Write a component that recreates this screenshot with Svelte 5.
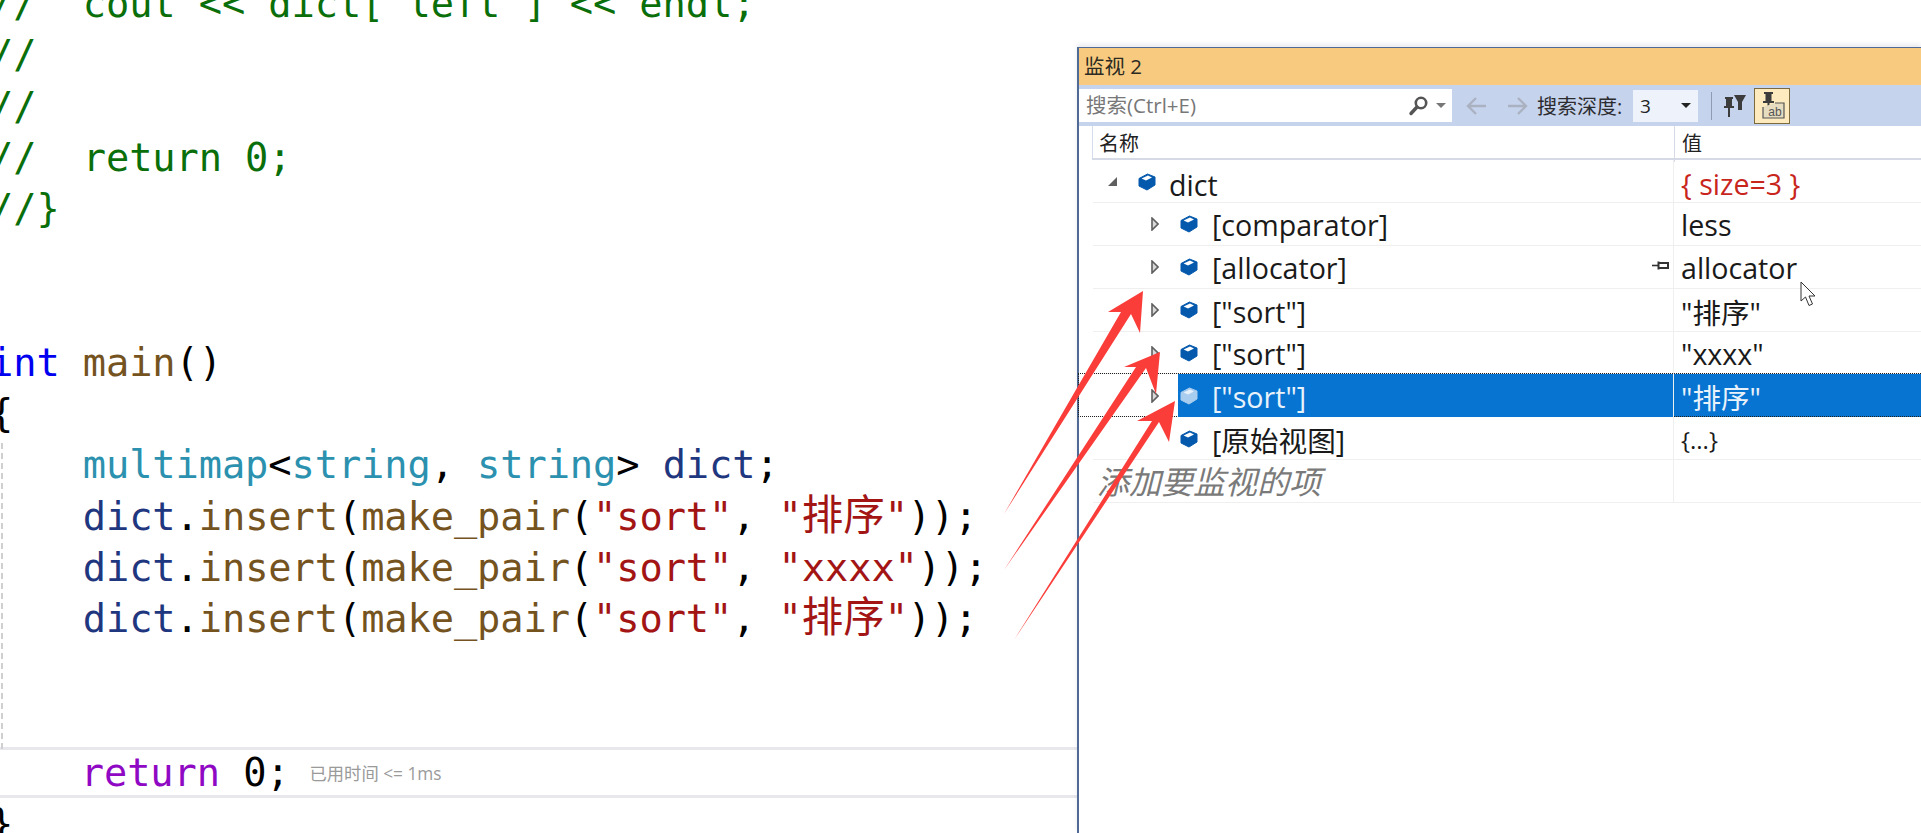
<script>
  const code = [
    [['c', '//  cout << dict["left"] << endl;']],
    [['c', '//']],
    [['c', '//']],
    [['c', '//  return 0;']],
    [['c', '//}']],
    [],
    [],
    [['k', 'int'], ['p', ' '], ['f', 'main'], ['p', '()']],
    [['p', '{']],
    [['p', '    '], ['t', 'multimap'], ['p', '<'], ['t', 'string'], ['p', ', '], ['t', 'string'], ['p', '> '], ['v', 'dict'], ['p', ';']],
    insertLine('排序', true),
    insertLine('xxxx', false),
    insertLine('排序', true),
    [],
    []
  ];

  function insertLine(val, cjk) {
    return [
      ['p', '    '], ['v', 'dict'], ['p', '.'], ['f', 'insert'], ['p', '('], ['f', 'make_pair'], ['p', '('],
      ['s', '"sort"'], ['p', ', '], ['s', '"'], [cjk ? 's cjk' : 's', val], ['s', '"'], ['p', '));']
    ];
  }

  const rows = [
    { name: '[comparator]', value: 'less' },
    { name: '[allocator]', value: 'allocator', pin: true },
    { name: '["sort"]', value: '"排序"' },
    { name: '["sort"]', value: '"xxxx"' },
    { name: '["sort"]', value: '"排序"', selected: true },
    { name: '[原始视图]', value: '{...}', small: true, noArrow: true }
  ];

  const arrows = [
    '1004,514 1121,312 1108,312 1143,291 1140,333 1131,314',
    '1004,570 1136,367 1124,367 1160,352 1156,394 1146,368',
    '1014,640 1152,421 1137,421 1175,401 1169,442 1159,422'
  ];
</script>

{#snippet cube(light)}
  <svg class="cube" width="18" height="18" viewBox="0 0 18 18">
    <path d="M9.5 1 L17 4 V12 L9 17 L1 13 V5.5 Z" fill={light ? '#a9cdee' : '#0559ad'} stroke={light ? '#a9cdee' : '#0559ad'} stroke-linejoin="round" />
    <path d="M3.6 5.6 L10 2.6 L14 4.4 L8 7.6 Z" fill={light ? '#e6f1fb' : '#ffffff'} />
  </svg>
{/snippet}

{#snippet closedArrow()}
  <svg width="8" height="14" viewBox="0 0 8 14"><path d="M1 1 L7 7 L1 13 Z" fill="#d9d9d9" stroke="#5f5f5f" stroke-width="1.6" /></svg>
{/snippet}

<div class="page">
  <div class="code">
    {#each code as line}
      <div class="line">{#each line as [cls, text]}<span class={cls}>{text}</span>{/each}</div>
    {/each}
    <div class="line current">
      {'    '}<span class="r">return</span>{' '}<span class="p">0;</span><span class="elapsed">已用时间 &lt;= 1ms</span>
    </div>
    <div class="line"><span class="p">{'}'}</span></div>
    <div class="guide"></div>
  </div>

  <section class="watch">
    <div class="title">监视 2</div>
    <div class="toolbar">
      <div class="search">
        <span class="hint">搜索(Ctrl+E)</span>
        <svg width="22" height="22" viewBox="0 0 22 22">
          <circle cx="13" cy="8" r="5.2" fill="none" stroke="#555" stroke-width="2.6" />
          <path d="M9 12 L3 18.5" stroke="#555" stroke-width="3.4" stroke-linecap="round" />
        </svg>
        <svg class="caret" width="10" height="6" viewBox="0 0 10 6"><path d="M0 0 H10 L5 5 Z" fill="#777" /></svg>
      </div>
      <svg class="nav" width="70" height="24" viewBox="0 0 70 24" fill="none" stroke="#aab2c2" stroke-width="2.4">
        <path d="M21 12 H3 M11 4 L3 12 L11 20" />
        <path d="M43 12 H61 M53 4 L61 12 L53 20" />
      </svg>
      <span class="depth">搜索深度:</span>
      <div class="combo"><span>3</span><svg width="10" height="6" viewBox="0 0 10 6"><path d="M0 0 H10 L5 5 Z" fill="#222" /></svg></div>
      <div class="sep"></div>
      <svg class="pinfilter" width="24" height="26" viewBox="0 0 24 26">
        <path d="M3 4 H11 V6 H10 V13 H12 V15 H8 V24 H6 V15 H2 V13 H4 V6 H3 Z" fill="#3c3c3c" />
        <path d="M12 2 H24 L20 9 V17 H16 V9 Z" fill="#3c3c3c" />
      </svg>
      <div class="active">
        <svg width="28" height="30" viewBox="0 0 28 30">
          <path d="M6 1 H15 V3 H13.5 V10 H16 V12 H11.5 V19 H9.5 V12 H5 V10 H7.5 V3 H6 Z" fill="#3c3c3c" />
          <path d="M5 16 V27 H26 V12 H17" fill="#e6dcc0" stroke="#555" stroke-width="1.2" />
          <text x="17" y="24.5" font-size="12" text-anchor="middle" fill="#555" font-family="Liberation Sans, sans-serif">ab</text>
        </svg>
      </div>
    </div>

    <div class="head">
      <div class="headName">名称</div>
      <div class="headValue">值</div>
    </div>

    <div class="grid">
      <div class="row">
        <div class="cell name">
          <div class="gutter top"><svg width="10" height="10" viewBox="0 0 10 10"><path d="M9 0 V9 H0 Z" fill="#5f5f5f" /></svg></div>
          <div class="item top">{@render cube(false)}<span class="label">dict</span></div>
        </div>
        <div class="cell value red">{'{'} size=3 {'}'}</div>
      </div>
      {#each rows as row}
        <div class="row" class:focused={row.selected}>
          <div class="cell name">
            <div class="gutter">{#if !row.noArrow}{@render closedArrow()}{/if}</div>
            <div class="item" class:sel={row.selected}>
              {@render cube(row.selected)}<span class="label">{row.name}</span>
              {#if row.pin}
                <svg class="rowpin" width="18" height="12" viewBox="0 0 18 12"><path d="M0 5.5 H6" stroke="#333" stroke-width="1.6" /><path d="M6.5 1.5 V9.5 M6.5 3 H16 V8 H6.5" fill="none" stroke="#333" stroke-width="2" /></svg>
              {/if}
            </div>
          </div>
          <div class="cell value" class:sel={row.selected} class:small={row.small}>{row.value}</div>
        </div>
      {/each}
      <div class="row">
        <div class="cell name"><span class="add">添加要监视的项</span></div>
        <div class="cell value"></div>
      </div>
    </div>
  </section>

  <svg class="pointer" width="18" height="26" viewBox="0 0 18 26">
    <path d="M1 1 V20 L5.5 16 L9 24.5 L12.5 23 L9 15 H15 Z" fill="#fff" stroke="#333" stroke-width="1" />
  </svg>

  <svg class="arrows" width="1921" height="833" viewBox="0 0 1921 833">
    {#each arrows as points}
      <polygon {points} fill="#fb3d3a" />
    {/each}
  </svg>
</div>

<style>
  :global(body) {
    margin: 0;
    background: #fff;
  }

  .page {
    position: relative;
    display: flex;
    width: 1921px;
    height: 833px;
    overflow: hidden;
    background: #fff;
    font-family: 'Open Sans', 'Noto Sans CJK SC', sans-serif;
  }

  .code {
    position: relative;
    flex: 0 0 1077px;
    margin-top: -22px;
    font-family: 'DejaVu Sans Mono', 'Noto Sans CJK SC', monospace;
    font-size: 38.7px;
    letter-spacing: -0.1px;
  }

  .line {
    position: relative;
    height: 51.25px;
    line-height: 51.25px;
    padding-left: 10px;
    margin-left: -20px;
    white-space: pre;
    color: #000;
  }

  .line.current {
    box-sizing: border-box;
    margin-left: 0;
    padding-left: 0;
    border-top: 3px solid #e8e8ec;
    border-bottom: 3px solid #e8e8ec;
    line-height: 45px;
    text-indent: -12px;
  }

  .guide {
    position: absolute;
    left: 1px;
    top: 465px;
    height: 306px;
    border-left: 2px dashed #cfcfcf;
  }

  .c { color: #0a6f0a; }
  .k { color: #0000f0; }
  .f { color: #74531f; }
  .t { color: #2b91af; }
  .v { color: #1f377f; }
  .s { color: #a31515; }
  .r { color: #8f08c4; }
  .p { color: #000; }

  .cjk {
    font-family: 'Noto Sans CJK SC', sans-serif;
    font-size: 41.5px;
    line-height: 0;
  }

  .elapsed {
    margin-left: 20px;
    font-family: 'Open Sans', 'Noto Sans CJK SC', sans-serif;
    font-size: 17.3px;
    letter-spacing: 0;
    color: #9a9a9a;
    vertical-align: 6px;
    line-height: 0;
  }

  .watch {
    flex: 1;
    margin-top: 47px;
    position: relative;
    z-index: 1;
    background: #fff;
    border-left: 2px solid #4f6a94;
    border-top: 1px solid #4f6a94;
    box-shadow: 0 -3px 4px rgba(120, 130, 160, 0.15);
  }

  .title {
    height: 37px;
    line-height: 37px;
    padding-left: 5px;
    background: #f7ca80;
    font-size: 20.5px;
    color: #2c2a22;
  }

  .toolbar {
    display: flex;
    align-items: center;
    height: 41px;
    background: #c6d3ec;
  }

  .search {
    display: flex;
    align-items: center;
    box-sizing: border-box;
    width: 373px;
    height: 33px;
    padding: 0 6px 0 7px;
    background: #fff;
  }

  .hint {
    flex: 1;
    margin-top: -3px;
    font-size: 20.5px;
    color: #777;
  }

  .caret {
    margin-left: 6px;
  }

  .nav {
    margin-left: 13px;
  }

  .depth {
    flex: 0 0 86px;
    margin-left: 2px;
    font-size: 20px;
    color: #2c2c30;
    white-space: nowrap;
  }

  .combo {
    display: flex;
    align-items: center;
    justify-content: space-between;
    box-sizing: border-box;
    width: 65px;
    height: 32px;
    margin-left: 10px;
    padding: 0 7px;
    background: #eef2fb;
    font-size: 19px;
    color: #222;
  }

  .sep {
    width: 1px;
    height: 28px;
    margin-left: 13px;
    background: #8f9ab3;
  }

  .pinfilter {
    margin-left: 10px;
  }

  .active {
    display: flex;
    align-items: center;
    justify-content: center;
    box-sizing: border-box;
    width: 36px;
    height: 36px;
    margin-left: 8px;
    border: 1px solid #7c6a3c;
    background: #fdeabf;
  }

  .head {
    display: grid;
    grid-template-columns: 581px 1fr;
    height: 32px;
    margin-left: 13px;
    border-left: 1px solid #d5dcec;
    border-bottom: 2px solid #d5dae6;
    font-size: 20px;
    line-height: 36px;
    color: #222;
  }

  .headName {
    padding-left: 6px;
  }

  .headValue {
    padding-left: 7px;
    border-left: 1px solid #d5dae6;
  }

  .grid {
    margin-left: 14px;
  }

  .row {
    position: relative;
    display: grid;
    grid-template-columns: 580px 1fr;
    box-sizing: border-box;
    height: 42.9px;
    border-bottom: 1px solid #efefef;
  }

  .row.focused::before {
    content: '';
    position: absolute;
    left: -15px;
    right: 0;
    top: -1px;
    bottom: -1px;
    border-top: 1px dotted #222;
    border-bottom: 1px dotted #222;
    border-left: 1px dotted #222;
    pointer-events: none;
  }

  .cell {
    display: flex;
    align-items: center;
    min-width: 0;
    padding-top: 2px;
    box-sizing: border-box;
    font-size: 28.6px;
    color: #1a1a1a;
    white-space: nowrap;
  }

  .name {
    position: relative;
    padding-top: 0;
  }

  .value {
    padding-left: 7px;
    border-left: 1px solid #efefef;
  }

  .value.small {
    font-size: 24px;
  }

  .red {
    color: #c8261c;
  }

  .gutter {
    display: flex;
    align-items: center;
    justify-content: flex-end;
    box-sizing: border-box;
    flex: 0 0 85px;
    height: 100%;
    padding-right: 19px;
  }

  .gutter.top {
    flex-basis: 44px;
    padding-right: 19px;
  }

  .item {
    display: flex;
    align-items: center;
    flex: 1;
    height: 100%;
    padding-left: 2px;
    position: relative;
  }

  .item.top {
    padding-left: 1px;
  }

  .label {
    margin-left: 14px;
    padding-top: 2px;
  }

  .item.top .label {
    margin-left: 13px;
    padding-top: 5px;
  }

  .sel {
    background: #0874d1;
    color: #e8f2fb;
  }

  .rowpin {
    position: absolute;
    right: 3px;
    top: 14px;
  }

  .add {
    padding-left: 4px;
    margin-top: -3px;
    font-size: 32px;
    font-style: italic;
    color: #7a7a7a;
  }

  .pointer {
    position: absolute;
    left: 1800px;
    top: 281px;
    z-index: 2;
  }

  .arrows {
    position: absolute;
    left: 0;
    top: 0;
    z-index: 3;
  }
</style>
